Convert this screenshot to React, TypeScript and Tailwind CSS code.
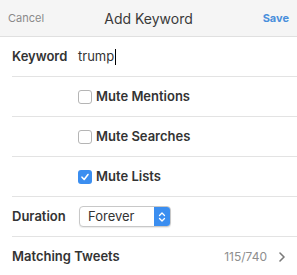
import React, { useState } from "react";

const Divider = () => <div className="ml-3 h-px bg-[#e3e3e3]" />;

const Check = ({ label, checked, onToggle }: { label: string; checked: boolean; onToggle: () => void }) => (
  <div className="flex h-[39px] items-center pl-[78px]">
    <button
      onClick={onToggle}
      className={
        checked
          ? "flex h-[14px] w-[14px] items-center justify-center rounded-[3px] bg-[#3b8ef0]"
          : "h-[14px] w-[14px] rounded-[3px] border border-[#b5b5b5] bg-white"
      }
    >
      {checked && (
        <svg width="10" height="10" viewBox="0 0 10 10">
          <path d="M2 5.2 L4.2 7.5 L8 2.5" fill="none" stroke="white" strokeWidth="1.6" strokeLinecap="round" strokeLinejoin="round" />
        </svg>
      )}
    </button>
    <span className="ml-1 text-[13px] font-semibold text-[#333]">{label}</span>
  </div>
);

export default function App() {
  const [mentions, setMentions] = useState(false);
  const [searches, setSearches] = useState(false);
  const [lists, setLists] = useState(true);

  return (
    <div className="h-[275px] w-[297px] overflow-hidden bg-white font-['Inter',sans-serif] text-[#333]">
      <div className="relative flex h-[37px] items-center justify-between border-b border-[#e0e0e0] bg-[#f5f5f5] px-2">
        <span className="text-[11px] text-[#8a8a8a]">Cancel</span>
        <span className="absolute left-1/2 -translate-x-1/2 text-[14px] text-[#3a3a3a]">Add Keyword</span>
        <span className="text-[11px] font-bold text-[#4a8fdc]">Save</span>
      </div>

      <div className="flex h-[39px] items-center pl-3">
        <span className="w-[66px] text-[13px] font-semibold">Keyword</span>
        <span className="flex items-center text-[13px] text-[#333]">
          trump
          <span className="ml-px h-[16px] w-px bg-black" />
        </span>
      </div>
      <Divider />
      <Check label="Mute Mentions" checked={mentions} onToggle={() => setMentions(!mentions)} />
      <Divider />
      <Check label="Mute Searches" checked={searches} onToggle={() => setSearches(!searches)} />
      <Divider />
      <Check label="Mute Lists" checked={lists} onToggle={() => setLists(!lists)} />
      <Divider />

      <div className="flex h-[39px] items-center pl-3">
        <span className="w-[67px] text-[13px] font-semibold">Duration</span>
        <div className="flex h-[21px] w-[92px] overflow-hidden rounded-[4px] border border-[#c8c8c8] bg-white shadow-[0_1px_1px_rgba(0,0,0,0.08)]">
          <span className="flex flex-1 items-center pl-2 text-[13px]">Forever</span>
          <span className="flex w-[16px] items-center justify-center bg-[#3b8ef0]">
            <svg width="8" height="12" viewBox="0 0 8 12">
              <path d="M1.5 4.5 L4 2 L6.5 4.5 M1.5 7.5 L4 10 L6.5 7.5" fill="none" stroke="white" strokeWidth="1.3" strokeLinecap="round" strokeLinejoin="round" />
            </svg>
          </span>
        </div>
      </div>
      <Divider />

      <div className="flex h-[39px] items-center pl-3 pr-3">
        <span className="flex-1 text-[13px] font-semibold">Matching Tweets</span>
        <span className="text-[12px] text-[#8e8e8e]">115/740</span>
        <svg className="ml-3" width="6" height="10" viewBox="0 0 6 10">
          <path d="M1 1 L5 5 L1 9" fill="none" stroke="#7a7a7a" strokeWidth="1.6" strokeLinecap="round" strokeLinejoin="round" />
        </svg>
      </div>
    </div>
  );
}
